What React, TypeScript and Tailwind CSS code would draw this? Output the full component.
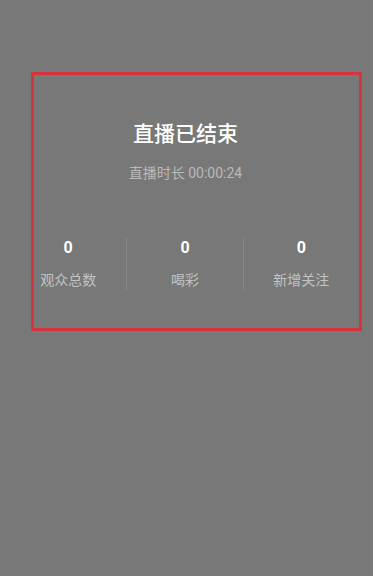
import React from "react";

const STATS = [
  { value: 0, label: "观众总数" },
  { value: 0, label: "喝彩" },
  { value: 0, label: "新增关注" },
];

export default function App() {
  return (
    <div
      className="relative h-[576px] w-full overflow-hidden bg-[#777877] text-white"
      style={{ fontFamily: '"Roboto", "Noto Sans CJK SC", sans-serif' }}
    >
      <div className="flex flex-col items-center pt-[120px]">
        <div className="pr-[2px] text-[21px] leading-[28px] font-medium">直播已结束</div>
        <div className="mt-[15px] pr-[2px] text-[14px] leading-[20px] text-[#b9bab9]">直播时长 00:00:24</div>
      </div>

      {/* 数据统计 */}
      <div className="mt-[55px] ml-[10px] grid w-[349px] grid-cols-3">
        {STATS.map((s, i) => (
          <div
            key={s.label}
            className={
              "flex h-[52px] flex-col items-center " + (i > 0 ? "border-l border-[#868786]" : "")
            }
          >
            <div className="text-[16px] leading-[20px] font-bold">{s.value}</div>
            <div className="mt-[12px] text-[14px] leading-[20px] text-[#c2c3c2]">{s.label}</div>
          </div>
        ))}
      </div>

      {/* 红框标注 */}
      <div className="pointer-events-none absolute left-[31px] top-[72px] h-[259px] w-[331px] border-[3px] border-[#d5343e]" />
    </div>
  );
}
